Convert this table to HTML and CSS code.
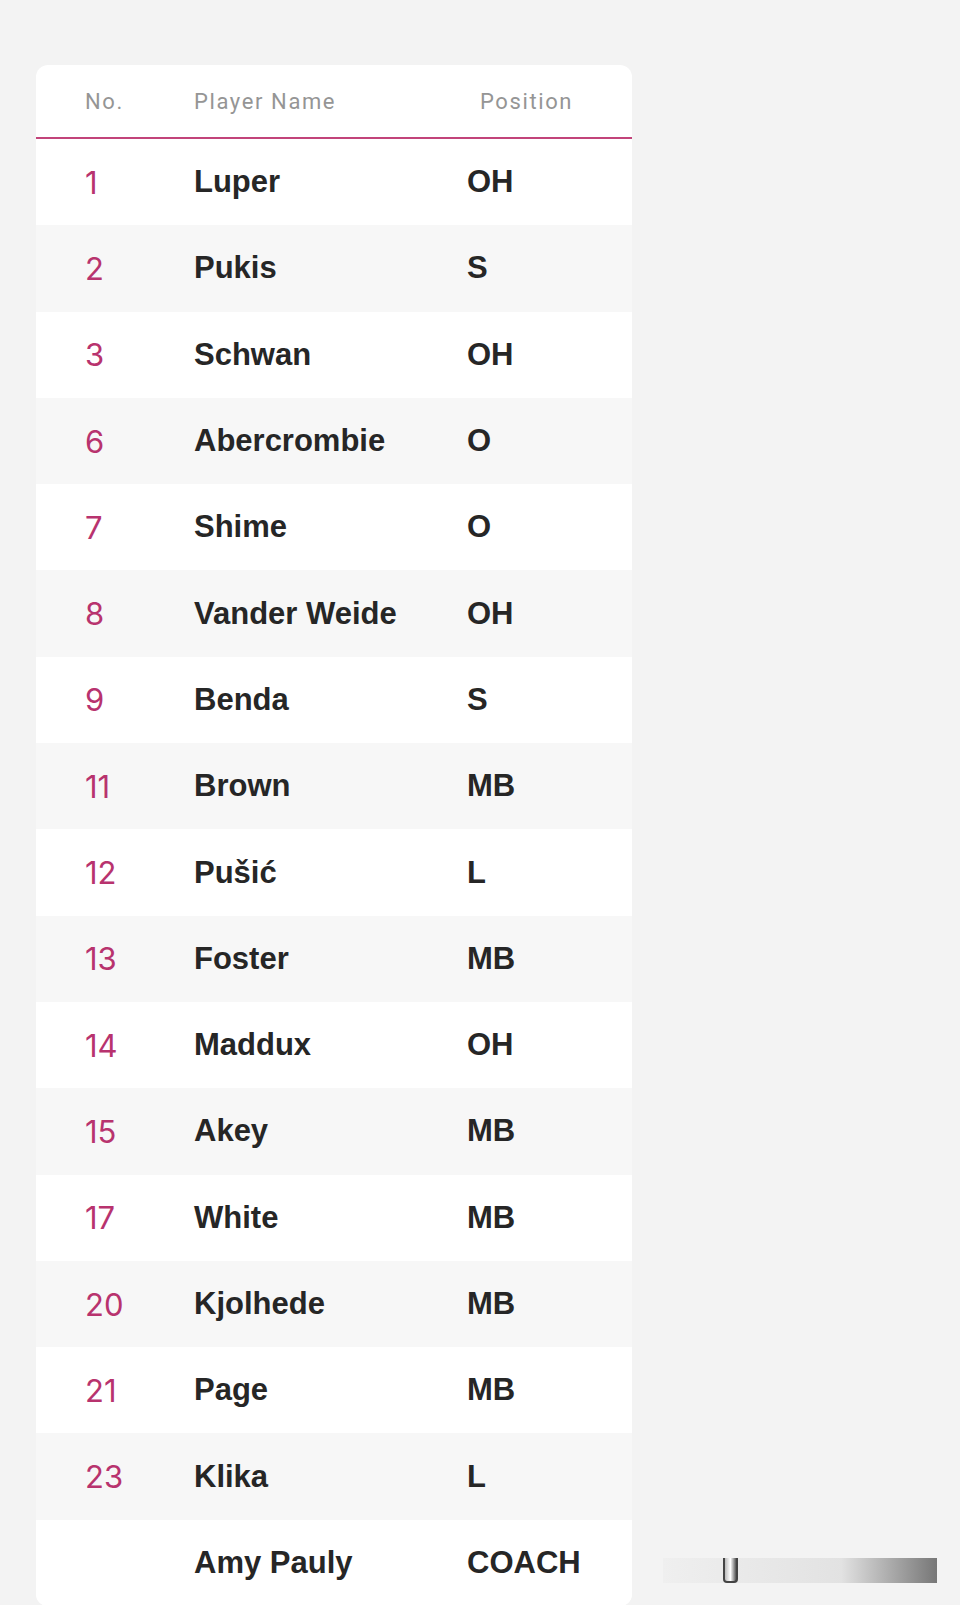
FILE: index.html
```html
<!DOCTYPE html>
<html lang="en">
<head>
<meta charset="utf-8">
<title>Roster</title>
<link rel="stylesheet" href="styles.css">
</head>
<body>
<div class="page">
  <div class="card">
    <div class="head">
      <div class="h-no">No.</div>
      <div class="h-name">Player Name</div>
      <div class="h-pos">Position</div>
    </div>
    <div class="row"><div class="no">1</div><div class="name">Luper</div><div class="pos">OH</div></div>
    <div class="row"><div class="no">2</div><div class="name">Pukis</div><div class="pos">S</div></div>
    <div class="row"><div class="no">3</div><div class="name">Schwan</div><div class="pos">OH</div></div>
    <div class="row"><div class="no">6</div><div class="name">Abercrombie</div><div class="pos">O</div></div>
    <div class="row"><div class="no">7</div><div class="name">Shime</div><div class="pos">O</div></div>
    <div class="row"><div class="no">8</div><div class="name">Vander Weide</div><div class="pos">OH</div></div>
    <div class="row"><div class="no">9</div><div class="name">Benda</div><div class="pos">S</div></div>
    <div class="row"><div class="no">11</div><div class="name">Brown</div><div class="pos">MB</div></div>
    <div class="row"><div class="no">12</div><div class="name">Pušić</div><div class="pos">L</div></div>
    <div class="row"><div class="no">13</div><div class="name">Foster</div><div class="pos">MB</div></div>
    <div class="row"><div class="no">14</div><div class="name">Maddux</div><div class="pos">OH</div></div>
    <div class="row"><div class="no">15</div><div class="name">Akey</div><div class="pos">MB</div></div>
    <div class="row"><div class="no">17</div><div class="name">White</div><div class="pos">MB</div></div>
    <div class="row"><div class="no">20</div><div class="name">Kjolhede</div><div class="pos">MB</div></div>
    <div class="row"><div class="no">21</div><div class="name">Page</div><div class="pos">MB</div></div>
    <div class="row"><div class="no">23</div><div class="name">Klika</div><div class="pos">L</div></div>
    <div class="row"><div class="no"></div><div class="name">Amy Pauly</div><div class="pos">COACH</div></div>
  </div>
  <div class="watermark"><span class="wm-mark"></span></div>
</div>
</body>
</html>
```

FILE: styles.css
```css
html, body {
  margin: 0;
  padding: 0;
  background: #f3f3f3;
}
.page {
  position: relative;
  width: 960px;
  height: 1605px;
  overflow: hidden;
  padding: 65px 0 0 36px;
  box-sizing: border-box;
}
.card {
  width: 596px;
  background: #ffffff;
  border-radius: 12px;
  overflow: hidden;
}
.head {
  display: grid;
  grid-template-columns: 109px 273px 1fr;
  height: 72px;
  align-items: center;
  padding-left: 49px;
  border-bottom: 2px solid #c2447a;
  font-family: Roboto, "Liberation Sans", sans-serif;
  font-size: 22px;
  letter-spacing: 1.6px;
  color: #959595;
}
.h-pos {
  padding-left: 13px;
}
.row {
  display: grid;
  grid-template-columns: 109px 273px 1fr;
  height: 86.3px;
  align-items: center;
  padding-left: 49px;
  background: #ffffff;
}
.row:nth-child(odd) {
  background: #f7f7f7;
}
.no {
  font-family: Inter, "Noto Sans", sans-serif;
  font-size: 31px;
  font-weight: 400;
  color: #b8336e;
}
.name, .pos {
  font-family: "Liberation Sans", Arial, sans-serif;
  font-size: 31px;
  font-weight: 700;
  color: #262626;
}
.watermark {
  position: absolute;
  left: 663px;
  top: 1558px;
  width: 274px;
  height: 25px;
  background: linear-gradient(to right, rgba(235,235,235,0.5), rgba(222,222,222,0.8) 65%, #777777);
}
.wm-mark {
  position: absolute;
  left: 60px;
  top: 0;
  width: 15px;
  height: 25px;
  border: 2px solid #444;
  border-top: none;
  border-radius: 0 0 4px 4px;
  box-sizing: border-box;
  background: linear-gradient(to right, #bbb, #fff, #555);
}
```
